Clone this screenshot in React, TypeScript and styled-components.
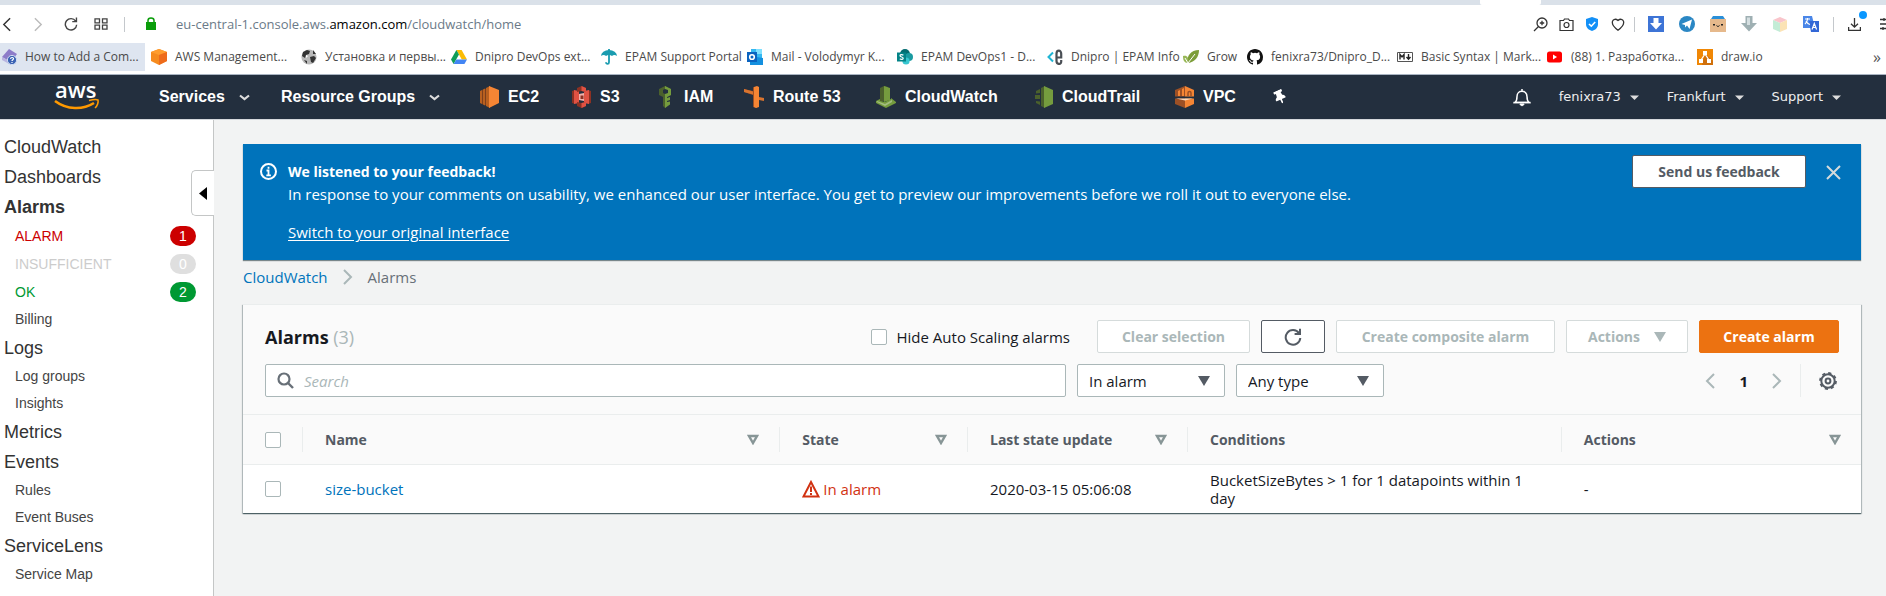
import React from "react";
import styled, { createGlobalStyle } from "styled-components";
import { FaThumbtack } from "react-icons/fa";

const ember = `"Open Sans", "Noto Sans", sans-serif`;
const arial = `"Liberation Sans", Arial, sans-serif`;

const GlobalStyle = createGlobalStyle`
  * { box-sizing: border-box; }
  body { margin: 0; background: #f2f3f3; color: #16191f; font: 15px/20px ${ember}; }
  button, input, select { font: inherit; color: inherit; margin: 0; }
  button { padding: 0; border: 0; background: none; cursor: pointer; }
  a { color: inherit; text-decoration: none; }
  svg { display: block; flex: none; }
`;

const Page = styled.div`
  display: flex;
  flex-direction: column;
  min-height: 100vh;
  overflow: hidden;
`;

/* ---------- browser chrome ---------- */

const TabStrip = styled.div`
  display: flex;
  justify-content: flex-end;
  height: 5px;
  padding-right: 345px;
  background: #dae1e9;
`;
const ActiveTab = styled.div`
  width: 61px;
  background: #fff;
  border-radius: 0 0 2px 2px;
`;
const AddressBar = styled.div`
  display: flex;
  align-items: center;
  height: 38px;
  background: #fff;
  color: #3c4043;
`;
const IconButton = styled.button<{ $w: number; $end?: boolean }>`
  display: flex;
  align-items: center;
  justify-content: ${(p) => (p.$end ? "flex-end" : "center")};
  width: ${(p) => p.$w}px;
  height: 30px;
  flex: none;
`;
const BarDivider = styled.div<{ $before?: number; $after: number }>`
  width: 1px;
  height: 15px;
  margin-left: ${(p) => p.$before ?? 0}px;
  margin-right: ${(p) => p.$after}px;
  background: #c4c8cc;
`;
const Url = styled.div`
  flex: 1;
  margin-left: 20px;
  font: 13px/20px ${ember};
  color: #6b7a88;
  b { font-weight: 400; color: #000; }
`;
const Tools = styled.div`
  display: flex;
  align-items: center;
`;
const DownloadWrap = styled.span`
  position: relative;
`;
const Dot = styled.span`
  position: absolute;
  top: -7px;
  right: -6px;
  width: 8px;
  height: 8px;
  border-radius: 50%;
  background: #0a97ff;
`;

const Bookmarks = styled.nav`
  display: flex;
  align-items: center;
  gap: 5px;
  height: 32px;
  padding-bottom: 4px;
  background: #fff;
  border-bottom: 1px solid #a9b4c2;
`;
const Bookmark = styled.a<{ $w: number; $hover?: boolean }>`
  display: flex;
  align-items: center;
  gap: 8px;
  width: ${(p) => p.$w}px;
  height: 28px;
  padding-left: 1px;
  flex: none;
  background: ${(p) => (p.$hover ? "#dee5f0" : "transparent")};
  font: 12px/20px ${ember};
  color: #4a4a4a;
  white-space: nowrap;
`;
const More = styled.button`
  margin-left: auto;
  padding-right: 5px;
  font: 16px/20px ${ember};
  color: #555;
`;

/* ---------- AWS navigation ---------- */

const NavBar = styled.header`
  display: flex;
  align-items: center;
  height: 44px;
  padding-left: 54px;
  background: #232f3e;
  color: #fff;
  font: bold 16px/20px ${arial};
`;
const Logo = styled.a`
  width: 105px;
  flex: none;
`;
const NavMenu = styled.button<{ $w: number }>`
  display: flex;
  align-items: center;
  gap: 14px;
  width: ${(p) => p.$w}px;
  flex: none;
  white-space: nowrap;
`;
const Shortcut = styled.a<{ $w: number }>`
  display: flex;
  align-items: center;
  gap: 8px;
  width: ${(p) => p.$w}px;
  flex: none;
  white-space: nowrap;
`;
const PinButton = styled.button`
  svg { transform: rotate(-24deg); }
`;
const NavRight = styled.div`
  display: flex;
  align-items: center;
  margin-left: auto;
  padding-right: 45px;
  font: 13px/20px "DejaVu Sans", Verdana, sans-serif;
  color: #eee;
`;
const Account = styled.button`
  display: flex;
  align-items: center;
  gap: 9px;
  margin-left: 28px;
`;

/* ---------- sidebar ---------- */

const Body = styled.div`
  display: flex;
  flex: 1;
  border-top: 1px solid #d5d8dc;
`;
const Sidebar = styled.aside`
  position: relative;
  width: 214px;
  flex: none;
  padding-top: 12px;
  background: #fff;
  border-right: 1px solid #c4c6c6;
  color: #444;
  font: 14px/20px ${arial};
`;
const SideHeading = styled.a<{ $active?: boolean }>`
  display: block;
  padding-left: 4px;
  color: #333;
  font-size: 18px;
  line-height: 30px;
  font-weight: ${(p) => (p.$active ? 700 : 400)};
`;
const SideItem = styled.a`
  display: block;
  padding-left: 15px;
  line-height: 27px;
`;
const StatusItem = styled.a<{ $color: string }>`
  display: flex;
  align-items: center;
  justify-content: space-between;
  height: 28px;
  padding: 0 17px 0 15px;
  color: ${(p) => p.$color};
`;
const Count = styled.span<{ $bg: string }>`
  width: 26px;
  height: 20px;
  border-radius: 10px;
  background: ${(p) => p.$bg};
  color: #fff;
  text-align: center;
`;
const Collapse = styled.button`
  position: absolute;
  top: 50px;
  right: -1px;
  display: flex;
  align-items: center;
  width: 23px;
  height: 46px;
  padding-left: 7px;
  background: #fff;
  border: 1px solid #c4c6c6;
  border-right: 0;
  border-radius: 5px 0 0 5px;
`;

/* ---------- main ---------- */

const Main = styled.main`
  flex: 1;
  min-width: 0;
  padding: 24px 25px 24px 29px;
`;
const Flash = styled.section`
  display: flex;
  align-items: flex-start;
  padding: 11px 20px 17px 17px;
  background: #0073bb;
  color: #fff;
  box-shadow: 0 1px 1px rgba(0, 28, 36, 0.5);
`;
const FlashText = styled.div`
  flex: 1;
  padding: 6px 0 0 11px;
  line-height: 22px;
  p, h2 { margin: 0; }
  h2 { font-size: 14px; }
  a { display: inline-block; margin-top: 16px; text-decoration: underline; text-underline-offset: 2px; }
`;
const FlashIcon = styled.div`
  padding-top: 8px;
`;
const Close = styled.button`
  padding: 10px 0 0 20px;
`;

const Button = styled.button<{ $kind?: "primary" | "normal"; $w: number }>`
  display: flex;
  align-items: center;
  justify-content: center;
  gap: 14px;
  width: ${(p) => p.$w}px;
  height: 33px;
  flex: none;
  border: 1px solid ${(p) => (p.$kind === "primary" ? "#ec7211" : "#545b64")};
  border-radius: 2px;
  background: ${(p) => (p.$kind === "primary" ? "#ec7211" : "#fff")};
  color: ${(p) => (p.$kind === "primary" ? "#fff" : "#545b64")};
  font-size: 14px;
  font-weight: 700;
  white-space: nowrap;
  &:disabled { border-color: #d5dbdb; color: #aab7b8; }
`;

const Crumbs = styled.nav`
  display: flex;
  align-items: center;
  gap: 15px;
  height: 33px;
  margin-bottom: 11px;
  color: #687078;
  a { color: #0073bb; }
`;

const Card = styled.section`
  background: #fff;
  border-top: 1px solid #eaeded;
  box-shadow: 0 1px 1px rgba(0, 28, 36, 0.5), 1px 1px 1px rgba(0, 28, 36, 0.2), -1px 1px 1px rgba(0, 28, 36, 0.2);
`;
const CardHead = styled.div`
  display: flex;
  flex-direction: column;
  gap: 11px;
  padding: 15px 22px 17px;
  background: #fafafa;
  border-bottom: 1px solid #eaeded;
`;
const Row = styled.div`
  display: flex;
  align-items: center;
  gap: 11px;
`;
const Title = styled.h1`
  flex: 1;
  margin: 0;
  font-size: 18px;
  line-height: 24px;
  span { font-weight: 400; color: #aab7b8; }
`;
const CheckLabel = styled.label`
  display: flex;
  align-items: center;
  gap: 10px;
  margin-right: 16px;
`;
const Check = styled.input`
  appearance: none;
  display: block;
  width: 16px;
  height: 16px;
  background: #fff;
  border: 1px solid #aab7b8;
  border-radius: 2px;
`;
const SearchBox = styled.label`
  display: flex;
  align-items: center;
  gap: 10px;
  flex: 0 1 801px;
  height: 33px;
  padding-left: 11px;
  background: #fff;
  border: 1px solid #aab7b8;
  border-radius: 2px;
  input {
    flex: 1;
    min-width: 0;
    border: 0;
    outline: 0;
    padding: 0;
    background: none;
  }
  input::placeholder { color: #aab7b8; font-style: italic; opacity: 1; }
`;
const SelectWrap = styled.div`
  display: grid;
  align-items: center;
  width: 148px;
  > * { grid-area: 1 / 1; }
  svg { justify-self: end; margin-right: 15px; pointer-events: none; }
`;
const Select = styled.select`
  appearance: none;
  width: 100%;
  height: 33px;
  padding: 0 32px 0 11px;
  background: #fff;
  border: 1px solid #aab7b8;
  border-radius: 2px;
`;
const Pager = styled.div`
  display: flex;
  align-items: center;
  gap: 24px;
  height: 33px;
  margin-left: auto;
  padding-right: 18px;
  border-right: 1px solid #eaeded;
`;
const Settings = styled.button`
  padding: 0 2px 0 7px;
`;

const Table = styled.table`
  width: 100%;
  table-layout: fixed;
  border-collapse: collapse;
  text-align: left;
`;
const Th = styled.th<{ $w: string }>`
  width: ${(p) => p.$w};
  padding: 12px 0;
  background: #fafafa;
  border-bottom: 1px solid #eaeded;
  color: #545b64;
  font-size: 14px;
  &:not(:last-child) > div { border-right: 1px solid #eaeded; }
`;
const ThInner = styled.div`
  display: flex;
  align-items: center;
  justify-content: space-between;
  height: 25px;
  padding: 0 20px 0 22px;
`;
const Td = styled.td`
  padding: 6px 22px;
  line-height: 18px;
  a { color: #0073bb; }
`;
const Alarmed = styled.span`
  display: flex;
  align-items: center;
  gap: 3px;
  color: #d13212;
`;

/* ---------- icons ---------- */

const Svg = ({ w = 16, h = 16, vb, children }: { w?: number; h?: number; vb?: string; children: React.ReactNode }) => (
  <svg width={w} height={h} viewBox={vb ?? `0 0 ${w} ${h}`} fill="none" aria-hidden="true">{children}</svg>
);
const Chevron = ({ dir, color, w = 10, h = 16, sw = 2 }: { dir: "l" | "r"; color: string; w?: number; h?: number; sw?: number }) => (
  <Svg w={w} h={h} vb="0 0 10 16">
    <path d={dir === "l" ? "M9 1 2 8l7 7" : "M1 1l7 7-7 7"} stroke={color} strokeWidth={sw} />
  </Svg>
);
const NavCaret = () => (
  <Svg w={11} h={7}><path d="M1 1.5 5.5 5 10 1.5" stroke="#ddd" strokeWidth="2.2" /></Svg>
);
const SmallCaret = () => (
  <Svg w={9} h={5}><path d="M0 .5h9L4.5 5z" fill="#ddd" /></Svg>
);
const Triangle = ({ color }: { color: string }) => (
  <Svg w={12} h={10}><path d="M0 0h12L6 10z" fill={color} /></Svg>
);
const SortIcon = () => (
  <Svg w={12} h={11}><path d="M2 2h8L6 9z" stroke="#879596" strokeWidth="2.4" /></Svg>
);
const Reload = ({ s, color, sw }: { s: number; color: string; sw: number }) => (
  <Svg w={s} h={s} vb="0 0 18 18">
    <path d="M15 5.2A7.3 7.3 0 1 0 16.3 10M16 .8V6h-5.4" stroke={color} strokeWidth={sw} />
  </Svg>
);

const BookmarkIcons: Record<string, React.ReactNode> = {
  help: <Svg><path d="M1 8 8 0l8 5-6 8z" fill="#8d7cc9" /><path d="m1 8 9 5v3L1 11z" fill="#b9b4e0" /><circle cx="11" cy="11" r="4.6" fill="#3b63b4" stroke="#cfdcf2" /><path d="M9.5 9.8c.3-1.9 3.2-1.6 3 0-.1 1-1.5 1-1.5 2.2m0 1v1" stroke="#fff" strokeWidth="1.2" /></Svg>,
  cube: <Svg><path d="M8 0l8 3v9l-8 4-8-4V3z" fill="#f68b1f" /><path d="M0 3l8 3 8-3-8-3z" fill="#ff9d2f" /><path d="M8 6l8-3v9l-8 4z" fill="#ee6b1b" /></Svg>,
  globe: <Svg><circle cx="8" cy="8" r="7.6" fill="#b9b9b9" /><path d="M2 3l4-2 3 1-1 3-3 1-1 3-3-2zM9 8l4-1 2 2-3 5-2-1zM12 1l3 4-3 0zM3 11l3 1v3z" fill="#333" /><path d="M5 6l2 1-2 2z" fill="#fff" /></Svg>,
  drive: <Svg><path d="M5.4 1h5.2L16 10.5h-5.2z" fill="#fbbc04" /><path d="M5.4 1 0 10.4 2.6 15 8 5.5z" fill="#0f9d58" /><path d="M5.3 10.5H16L13.4 15H2.6z" fill="#4285f4" /></Svg>,
  umbrella: <Svg><path d="M0 7a8 6 0 0 1 16 0c-1.6-1.5-3.7-1.5-5 0-1.5-1.3-4.5-1.3-6 0C3.7 5.5 1.6 5.5 0 7z" fill="#1a9cb0" /><path d="M8 0v13.2c0 2.2-3 2.2-3 0" stroke="#1a9cb0" strokeWidth="1.8" /></Svg>,
  outlook: <Svg><path d="M4 0h11v10H4z" fill="#35b8f1" /><path d="M9 0h6v5H9z" fill="#7fe0ff" /><path d="M3 7l13 2v7H3z" fill="#1490df" /><path d="M0 3h10v10H0z" fill="#0a63c0" /><circle cx="5" cy="8" r="2.3" stroke="#fff" strokeWidth="1.6" /></Svg>,
  sharepoint: <Svg><circle cx="8" cy="5" r="5" fill="#036c70" /><circle cx="12" cy="8" r="4" fill="#1a9ba1" /><circle cx="9" cy="12" r="3.6" fill="#37c6d0" /><path d="M0 3.5h9v9H0z" fill="#038387" /><path d="M6.4 6.2C5 5.2 3 5.6 3 6.8c0 1.5 3.2.9 3.2 2.5 0 1.3-2.2 1.5-3.4.5" stroke="#fff" strokeWidth="1.2" /></Svg>,
  epam: <Svg><path d="M6 3.5 1.5 8 6 12.5" stroke="#1fb5d4" strokeWidth="2" /><path d="M9.5 8.5h4.7V4.8c0-4.3-4.7-4.3-4.7 0V12c0 3.8 4.7 3.8 4.7.8V11" stroke="#4a4f55" strokeWidth="2.2" /></Svg>,
  leaf: <Svg><path d="M5 14C3 7 8 1 16 1c0 7-4 12-11 13z" fill="#7d9e3a" /><path d="M0 7c4-1 6 1 5 7-4 0-5-3-5-7z" fill="#98b757" /><path d="M5 14 12 5M5 14 2 9" stroke="#fff" /></Svg>,
  github: <Svg><path fill="#111" d="M8 0C3.58 0 0 3.58 0 8c0 3.54 2.29 6.53 5.47 7.59.4.07.55-.17.55-.38 0-.19-.01-.82-.01-1.49-2.01.37-2.53-.49-2.69-.94-.09-.23-.48-.94-.82-1.13-.28-.15-.68-.52-.01-.53.63-.01 1.08.58 1.23.82.72 1.21 1.87.87 2.33.66.07-.52.28-.87.51-1.07-1.78-.2-3.64-.89-3.64-3.95 0-.87.31-1.59.82-2.15-.08-.2-.36-1.02.08-2.12 0 0 .67-.21 2.2.82a7.6 7.6 0 0 1 4 0c1.53-1.04 2.2-.82 2.2-.82.44 1.1.16 1.92.08 2.12.51.56.82 1.27.82 2.15 0 3.07-1.87 3.75-3.65 3.95.29.25.54.73.54 1.48 0 1.07-.01 1.93-.01 2.2 0 .21.15.46.55.38A8 8 0 0 0 16 8c0-4.42-3.58-8-8-8z" /></Svg>,
  markdown: <Svg><path d="M.5 3.5h15v9H.5z" fill="#fff" stroke="#555" /><path d="M3 10.5v-5l2 2.5 2-2.5v5M11.5 5v5M9.5 8l2 2.3 2-2.3" stroke="#222" strokeWidth="1.4" /></Svg>,
  youtube: <Svg><rect x="0" y="2.5" width="15" height="11" rx="2.5" fill="#f00" /><path d="M6 5.5v5L10 8z" fill="#fff" /></Svg>,
  drawio: <Svg><path d="M0 0h16v16H0z" fill="#f08705" /><path d="M8 4l8 8v4H5z" fill="#d0700c" /><path d="M6 2h4v4H6zM2 10h4v4H2zM10 10h4v4h-4z" fill="#fff" /><path d="M8 5l-4 6M8 5l4 6" stroke="#fff" strokeWidth="1.3" /></Svg>,
};

const bookmarks: [string, string, number][] = [
  ["help", "How to Add a Com...", 145],
  ["cube", "AWS Management...", 145],
  ["globe", "Установка и первы...", 145],
  ["drive", "Dnipro DevOps ext...", 145],
  ["umbrella", "EPAM Support Portal", 141],
  ["outlook", "Mail - Volodymyr K...", 145],
  ["sharepoint", "EPAM DevOps1 - D...", 145],
  ["epam", "Dnipro | EPAM Info", 131],
  ["leaf", "Grow", 59],
  ["github", "fenixra73/Dnipro_D...", 145],
  ["markdown", "Basic Syntax | Mark...", 145],
  ["youtube", "(88) 1. Разработка...", 145],
  ["drawio", "draw.io", 70],
];

const ServiceIcons: Record<string, React.ReactNode> = {
  ec2: <Svg w={20} h={22}><path d="M0 5l2-1v14l-2-1zM3 3.5l2-1v17l-2-1zM6 2l4-2v22l-4-2z" fill="#b8601f" /><path d="M2 4l1-.5v15L2 18zM5 3l1-.5v17L5 19z" fill="#7d3f1c" /><path d="M9 0l10 4v13l-10 5z" fill="#f58534" /></Svg>,
  s3: <Svg w={20} h={22}><path d="M0 5l3-1v14l-3-1zM16 4l3 1v12l-3 1z" fill="#8c3123" /><path d="M2 4l5 1v12l-5 1zM17 4l-5 1v12l5 1z" fill="#e05243" /><path d="M5 2l4.500-2L14 2v4l-4.500-1L5 6zM5 20l4.500 2 4.500-2v-4l-4.500 1L5 16z" fill="#8c3123" /><path d="M9.500 0 14 2v4l-4.500-1zM9.500 17l4.500-1v4l-4.500 2z" fill="#e05243" /><path d="M7 8l5-1v8l-5-1z" fill="#f2b0a9" /><path d="M8.500 9.500h3V13h-3z" fill="#8c3123" /></Svg>,
  iam: <Svg w={18} h={22}><path d="M1 3l6-3 6 3v6l-4 2v9l-2 2-2-2v-9L1 9z" fill="#4b612c" /><path d="M7 0l6 3v6l-4 2v1l3-1v3l-3 1v1l3-.5v3L7 22z" fill="#759c3e" /><path d="M5 4l2-1 3 1v3L7 8 5 7z" fill="#232f3e" /></Svg>,
  route: <Svg w={21} h={22}><path d="M0 3l9 2V1l4 1v20l-4-1V9L0 6z" fill="#9d5025" /><path d="M10 1l3-1 2 1v20l-3 1-2-1z" fill="#f58534" /><path d="M0 3l9 2.5v3L0 6zM15 11l5 1v3l-5-1z" fill="#d9742f" /></Svg>,
  watch: <Svg w={21} h={22}><path d="M4 2l4-2 4 1v13l-8 2z" fill="#4b612c" /><path d="M8 0l6 2v12l-6 2z" fill="#759c3e" /><path d="M0 15l4-2v2l5 1 6-3v-1l5 4v1l-10 5-10-5z" fill="#759c3e" /><path d="M1 15l8 3 7-4v2l-7 4-8-4z" fill="#b7ca9d" opacity=".7" /></Svg>,
  trail: <Svg w={19} h={22}><path d="M6 2l4-2v22l-4-2z" fill="#4b612c" /><path d="M9 0l9 4v14l-9 4z" fill="#759c3e" /><path d="M0 9h5v4H0zM1 5l4-2v4l-4 .5zM1 15l4 .5V19l-4-2z" fill="#4b612c" /></Svg>,
  vpc: <Svg w={20} h={22}><path d="M0 4l10-4v22L0 18z" fill="#9d5025" /><path d="M10 0l9 4v14l-9 4z" fill="#f58534" /><path d="M3 10V5l2-1v6zM7 10V3l2-1v8z" fill="#f58534" /><path d="M13 10V7c0-2 3-2 3 0v3" stroke="#9d5025" strokeWidth="1.5" /><path d="M0 10.5h19v2H0z" fill="#232f3e" /><path d="M1 12.5h17l-8 2z" fill="#fbd9bd" /></Svg>,
};
const shortcuts: [string, string, number][] = [
  ["ec2", "EC2", 92],
  ["s3", "S3", 86],
  ["iam", "IAM", 86],
  ["route", "Route 53", 132],
  ["watch", "CloudWatch", 159],
  ["trail", "CloudTrail", 140],
  ["vpc", "VPC", 98],
];

const Bell = () => (
  <Svg w={18} h={19}><path d="M9 1v2M2 14.5c2-1.5 2-3 2-6C4 1.6 14 1.6 14 8.5c0 3 0 4.5 2 6H2z" stroke="#fff" strokeWidth="1.5" /><path d="M.5 14.5h17" stroke="#fff" strokeWidth="1.5" /><path d="M7 16c.3 2.2 3.7 2.2 4 0z" fill="#fff" stroke="#fff" /></Svg>
);

/* ---------- sections ---------- */

const Chrome = () => (
  <>
    <TabStrip><ActiveTab /></TabStrip>
    <AddressBar>
      <IconButton $w={12} aria-label="Back"><Chevron dir="l" color="#333" w={9} h={15} sw={1.6} /></IconButton>
      <IconButton $w={52} aria-label="Forward"><Chevron dir="r" color="#bbb" w={9} h={15} sw={1.6} /></IconButton>
      <IconButton $w={14} aria-label="Reload"><Reload s={14} color="#444" sw={1.8} /></IconButton>
      <IconButton $w={46} aria-label="Speed dial">
        <Svg w={14} h={12}><path d="M1 .8h4.5v4H1zM8.5.8H13v4H8.5zM1 7.2h4.5v4H1zM8.5 7.2H13v4H8.5z" stroke="#444" strokeWidth="1.3" /></Svg>
      </IconButton>
      <BarDivider $after={21} />
      <Svg w={10} h={14}><path d="M0 5h10v8H0z" fill="#0a9d0a" /><path d="M2 6V3.5c0-3.3 6-3.3 6 0V6" stroke="#0a9d0a" strokeWidth="1.5" /></Svg>
      <Url>eu-central-1.console.aws.<b>amazon.com</b>/cloudwatch/home</Url>
      <Tools>
        <IconButton $w={26} aria-label="Zoom"><Svg w={15} h={15}><circle cx="9" cy="6" r="5" stroke="#333" strokeWidth="1.3" /><path d="M5.5 9.5 1 14M9 3.8v4.4M6.8 6h4.4" stroke="#333" strokeWidth="1.3" /></Svg></IconButton>
        <IconButton $w={26} aria-label="Snapshot"><Svg w={15} h={13}><path d="M1 2.5h3.5L5.5 1h4l1 1.5H14v10H1z" stroke="#333" strokeWidth="1.2" /><circle cx="7.5" cy="7" r="2.5" stroke="#333" strokeWidth="1.2" /></Svg></IconButton>
        <IconButton $w={26} aria-label="Shield"><Svg w={12} h={14}><path d="M6 0l6 2v5c0 4-3 6-6 7-3-1-6-3-6-7V2z" fill="#1390f7" /><path d="M3 7l2.3 2.2L9.2 5" stroke="#fff" strokeWidth="1.6" /></Svg></IconButton>
        <IconButton $w={26} aria-label="Save page"><Svg w={14} h={13}><path d="M7 12.2C-3 5 2.5-1.5 7 2.5c4.5-4 10 2.5 0 9.7z" stroke="#333" strokeWidth="1.3" /></Svg></IconButton>
        <BarDivider $before={3} $after={5} />
        <IconButton $w={31} aria-label="Saver"><Svg><path d="M0 0h16v16H0z" fill="#3d74d6" /><path d="M5.5 2h5v5H14l-6 6.5L2 7h3.5z" fill="#fff" /></Svg></IconButton>
        <IconButton $w={31} aria-label="Telegram"><Svg><circle cx="8" cy="8" r="8" fill="#2b87c4" /><path d="M2.5 8 13 3.5 10.5 13 8 9.5 6 11.5V9z" fill="#fff" /></Svg></IconButton>
        <IconButton $w={31} aria-label="Face box"><Svg><path d="M0 3h16v13H0z" fill="#e6b98c" /><path d="M3 0h10l2 3H1z" fill="#2a8fd8" /><path d="M3 8h2v1.5H3zM11 8h2v1.5h-2z" fill="#222" /><path d="M6.5 9.5c.5 1.2 2.500 1.2 3 0" stroke="#222" /></Svg></IconButton>
        <IconButton $w={31} aria-label="Downloader"><Svg><path d="M4.5 0h7v7H16l-8 8.5L0 7h4.5z" fill="#9fb0b3" /><path d="M6 1.5h3V9H6z" fill="#d5dfe1" /></Svg></IconButton>
        <IconButton $w={31} aria-label="Cube"><Svg w={14} h={15}><path d="M0 3l7-3 7 3-7 3z" fill="#f9c5cb" /><path d="M0 3l7 3v9l-7-3z" fill="#c3ecd6" /><path d="M14 3 7 6v9l7-3z" fill="#fbe3b5" /></Svg></IconButton>
        <IconButton $w={31} aria-label="Translate"><Svg><path d="M0 0h9l3 12H0z" fill="#4a86e8" /><path d="M6 5h10v11H8z" fill="#3367d6" /><path d="M2 3h5M4.5 2v1.5C4 6 3 7 2 8m1-3c1 2 2 3 4 3.5M9 13.5l2.3-6 2.3 6M10 11.5h3" stroke="#fff" strokeWidth="1.2" /></Svg></IconButton>
        <BarDivider $before={7} $after={6} />
        <IconButton $w={28} aria-label="Downloads"><DownloadWrap><Svg w={13} h={13}><path d="M6.5 0v9M3 5.8 6.500 9.2 10 5.8M.6 9v3.4h11.800V9" stroke="#333" strokeWidth="1.3" /></Svg><Dot /></DownloadWrap></IconButton>
        <IconButton $w={18} $end aria-label="Easy setup"><Svg w={6} h={12}><path d="M0 1.5h6M0 6h6M0 10.5h6M4 0v3M3 9v3" stroke="#333" strokeWidth="1.3" /></Svg></IconButton>
      </Tools>
    </AddressBar>
    <Bookmarks>
      {bookmarks.map(([icon, name, w], i) => (
        <Bookmark key={icon} href="#" $w={w} $hover={i === 0}>{BookmarkIcons[icon]}{name}</Bookmark>
      ))}
      <More>»</More>
    </Bookmarks>
  </>
);

const columns = [
  { name: "Name", w: "29.5%", sort: true },
  { name: "State", w: "11.6%", sort: true },
  { name: "Last state update", w: "13.6%", sort: true },
  { name: "Conditions", w: "23.1%", sort: false },
  { name: "Actions", w: "auto", sort: true },
];

export default function App() {
  return (
    <Page>
      <GlobalStyle />
      <Chrome />
      <NavBar>
        <Logo href="#" aria-label="AWS home">
          <svg width="46" height="44" viewBox="0 0 46 44">
            <text x="1" y="23" fontFamily="Open Sans" fontSize="22" fontWeight="600" fill="#fff">aws</text>
            <path d="M1 26c12 9 28 9 39 2" fill="none" stroke="#ff9900" strokeWidth="2.6" />
            <path d="M35 25.500c4-1 8-1 9-.5.5 2-.5 6-3 8" fill="none" stroke="#ff9900" strokeWidth="1.6" />
          </svg>
        </Logo>
        <NavMenu $w={122}>Services <NavCaret /></NavMenu>
        <NavMenu $w={199}>Resource Groups <NavCaret /></NavMenu>
        {shortcuts.map(([icon, name, w]) => (
          <Shortcut key={icon} href="#" $w={w}>{ServiceIcons[icon]}{name}</Shortcut>
        ))}
        <PinButton aria-label="Edit shortcuts"><FaThumbtack size={14} /></PinButton>
        <NavRight>
          <button aria-label="Notifications"><Bell /></button>
          <Account>fenixra73 <SmallCaret /></Account>
          <Account>Frankfurt <SmallCaret /></Account>
          <Account>Support <SmallCaret /></Account>
        </NavRight>
      </NavBar>
      <Body>
        <Sidebar>
          <SideHeading href="#">CloudWatch</SideHeading>
          <SideHeading href="#">Dashboards</SideHeading>
          <SideHeading href="#" $active>Alarms</SideHeading>
          <StatusItem href="#" $color="#cc0000">ALARM <Count $bg="#cc0000">1</Count></StatusItem>
          <StatusItem href="#" $color="#cccccc">INSUFFICIENT <Count $bg="#dfdfdf">0</Count></StatusItem>
          <StatusItem href="#" $color="#009933">OK <Count $bg="#009933">2</Count></StatusItem>
          <SideItem href="#">Billing</SideItem>
          <SideHeading href="#">Logs</SideHeading>
          <SideItem href="#">Log groups</SideItem>
          <SideItem href="#">Insights</SideItem>
          <SideHeading href="#">Metrics</SideHeading>
          <SideHeading href="#">Events</SideHeading>
          <SideItem href="#">Rules</SideItem>
          <SideItem href="#">Event Buses</SideItem>
          <SideHeading href="#">ServiceLens</SideHeading>
          <SideItem href="#">Service Map</SideItem>
          <Collapse aria-label="Collapse navigation">
            <Svg w={8} h={13}><path d="M8 0v13L0 6.500z" fill="#000" /></Svg>
          </Collapse>
        </Sidebar>
        <Main>
          <Flash>
            <FlashIcon>
              <Svg w={17} h={17}><circle cx="8.5" cy="8.5" r="7.5" stroke="#fff" strokeWidth="2" /><path d="M8.5 3.8v2M6.5 7.5h2V12M6.3 12.3h4.6" stroke="#fff" strokeWidth="1.8" /></Svg>
            </FlashIcon>
            <FlashText>
              <h2>We listened to your feedback!</h2>
              <p>In response to your comments on usability, we enhanced our user interface. You get to preview our improvements before we roll it out to everyone else.</p>
              <a href="#">Switch to your original interface</a>
            </FlashText>
            <Button $w={174}>Send us feedback</Button>
            <Close aria-label="Dismiss"><Svg w={15} h={15}><path d="M1 1l13 13M14 1 1 14" stroke="#d5dbdb" strokeWidth="2" /></Svg></Close>
          </Flash>
          <Crumbs aria-label="Breadcrumb">
            <a href="#">CloudWatch</a>
            <Chevron dir="r" color="#aab7b8" />
            <span>Alarms</span>
          </Crumbs>
          <Card>
            <CardHead>
              <Row>
                <Title>Alarms <span>(3)</span></Title>
                <CheckLabel><Check type="checkbox" />Hide Auto Scaling alarms</CheckLabel>
                <Button $w={153} disabled>Clear selection</Button>
                <Button $w={64} aria-label="Refresh"><Reload s={18} color="#545b64" sw={2} /></Button>
                <Button $w={219} disabled>Create composite alarm</Button>
                <Button $w={122} disabled>Actions <Triangle color="#aab7b8" /></Button>
                <Button $w={140} $kind="primary">Create alarm</Button>
              </Row>
              <Row>
                <SearchBox>
                  <Svg w={17} h={17}><circle cx="7" cy="7" r="5.5" stroke="#687078" strokeWidth="2.2" /><path d="M11 11l5 5" stroke="#687078" strokeWidth="2.4" /></Svg>
                  <input type="text" placeholder="Search" aria-label="Search alarms" />
                </SearchBox>
                <SelectWrap>
                  <Select aria-label="Alarm state"><option>In alarm</option></Select>
                  <Triangle color="#545b64" />
                </SelectWrap>
                <SelectWrap>
                  <Select aria-label="Alarm type"><option>Any type</option></Select>
                  <Triangle color="#545b64" />
                </SelectWrap>
                <Pager>
                  <button aria-label="Previous page"><Chevron dir="l" color="#aab7b8" /></button>
                  <b>1</b>
                  <button aria-label="Next page"><Chevron dir="r" color="#aab7b8" /></button>
                </Pager>
                <Settings aria-label="Preferences">
                  <Svg w={18} h={18}>
                    <circle cx="9" cy="9" r="6.7" stroke="#545b64" strokeWidth="2" />
                    <circle cx="9" cy="9" r="8" stroke="#545b64" strokeWidth="1.8" strokeDasharray="3.14 3.14" />
                    <circle cx="9" cy="9" r="2.4" stroke="#545b64" strokeWidth="2" />
                  </Svg>
                </Settings>
              </Row>
            </CardHead>
            <Table>
              <thead>
                <tr>
                  <Th $w="60px"><ThInner><Check type="checkbox" aria-label="Select all alarms" /></ThInner></Th>
                  {columns.map((c) => (
                    <Th key={c.name} $w={c.w}><ThInner>{c.name}{c.sort && <SortIcon />}</ThInner></Th>
                  ))}
                </tr>
              </thead>
              <tbody>
                <tr>
                  <Td><Check type="checkbox" aria-label="Select size-bucket" /></Td>
                  <Td><a href="#">size-bucket</a></Td>
                  <Td>
                    <Alarmed>
                      <Svg w={18} h={18}><path d="M9 2 1.5 16.5h15z" stroke="#d13212" strokeWidth="2" /><path d="M9 6.5V12M9 13v2" stroke="#d13212" strokeWidth="2" /></Svg>
                      In alarm
                    </Alarmed>
                  </Td>
                  <Td>2020-03-15 05:06:08</Td>
                  <Td>BucketSizeBytes &gt; 1 for 1 datapoints within 1 day</Td>
                  <Td>-</Td>
                </tr>
              </tbody>
            </Table>
          </Card>
        </Main>
      </Body>
    </Page>
  );
}
